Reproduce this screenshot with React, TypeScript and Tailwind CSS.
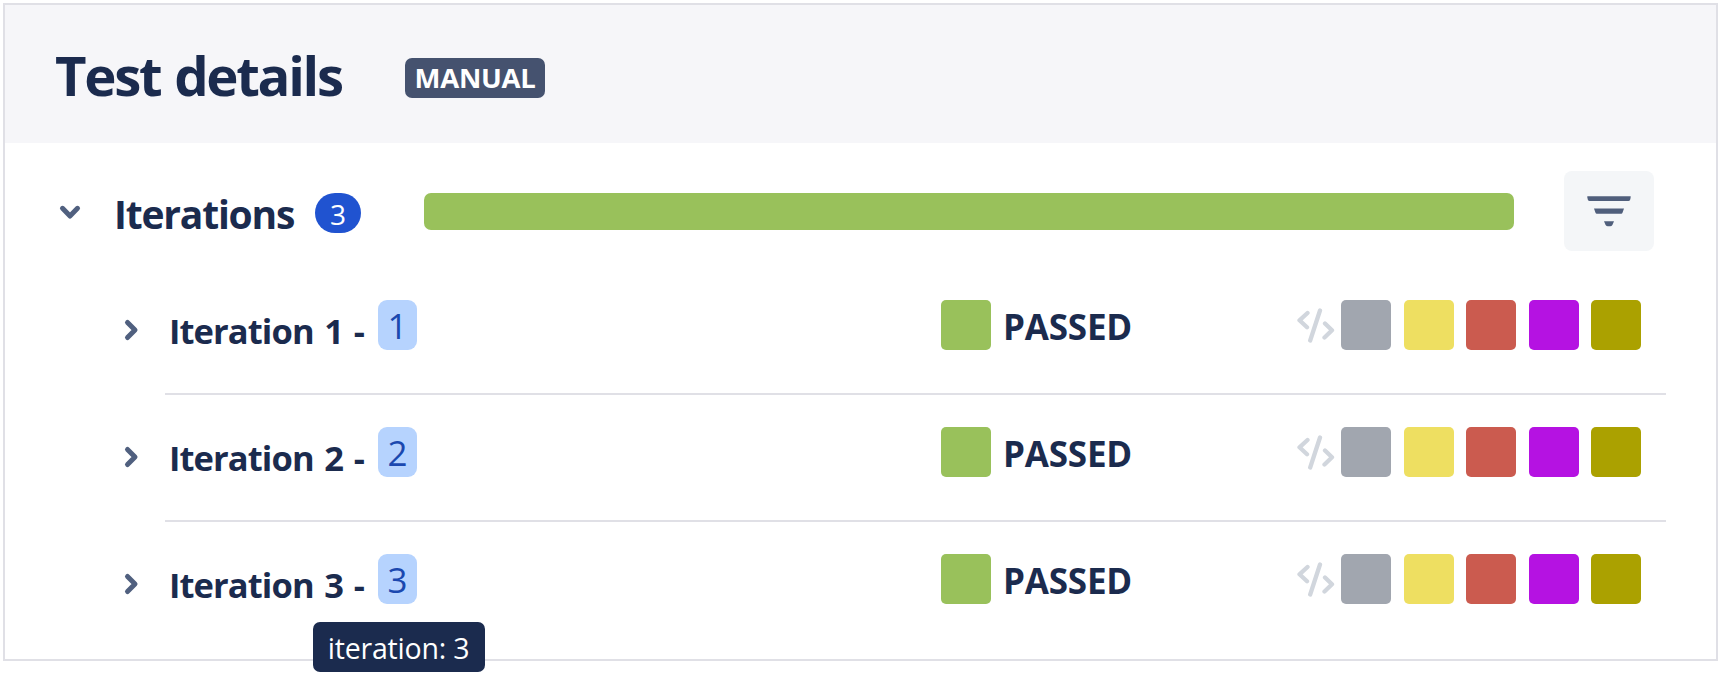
const iterations = [1, 2, 3];

const stepColors = [
  "bg-[#a1a6af]",
  "bg-[#eedf61]",
  "bg-[#cb5b4f]",
  "bg-[#b512e2]",
  "bg-[#aba100]",
];

const stepMargins = ["", "ml-[13px]", "ml-[12px]", "ml-[13px]", "ml-[12px]"];

function ChevronDown() {
  return (
    <svg className="h-5 w-6 shrink-0" viewBox="0 0 24 20" fill="none" stroke="#50607f" strokeWidth="5" strokeLinecap="round" strokeLinejoin="round">
      <path d="M4.500 7.300 12 15l7.500-7.700" />
    </svg>
  );
}

function ChevronRight() {
  return (
    <svg className="relative top-[5px] left-[2px] h-6 w-5 shrink-0" viewBox="0 0 20 24" fill="none" stroke="#50607f" strokeWidth="5" strokeLinecap="round" strokeLinejoin="round">
      <path d="M5.500 4.500 13 12l-7.500 7.500" />
    </svg>
  );
}

function FilterIcon() {
  return (
    <svg className="h-[31px] w-11" viewBox="0 0 44 31" fill="#505f7c">
      <path d="M.3.3h43.4q0 4.7-2.2 4.7h-39Q.3 5 .3.3Z" />
      <path d="M7 12.6h30l-1.4 4q-.4 1.2-1.4 1.2H9.8q-1 0-1.4-1.2Z" />
      <path d="M17 25.3h10l-1.6 3.6q-.8 1.4-2.2 1.4h-2.4q-1.4 0-2.2-1.4Z" />
    </svg>
  );
}

function CodeIcon() {
  return (
    <svg className="relative left-[2px] h-9 w-[38px] shrink-0" viewBox="0 0 38 36" fill="none" stroke="#d1d6dd" strokeWidth="4.3" strokeLinecap="round" strokeLinejoin="round">
      <path d="m10.500 6-8 7.300 7.500 7" />
      <path d="M23 3.500 13.200 33.500" />
      <path d="m28 16.500 7 6.800-7.500 7.200" />
    </svg>
  );
}

function IterationRow({ n, last }: { n: number; last: boolean }) {
  return (
    <div
      className={
        last
          ? "flex h-[127px] items-start pt-[32px]"
          : "flex h-[127px] items-start border-b-2 border-[#e0e0e6] pt-[32px]"
      }
    >
      <div className="-ml-[45px] flex h-[50px] w-[258px] shrink-0 items-center">
        <ChevronRight />
        <span className="relative top-[6px] ml-[29px] w-[209px] whitespace-nowrap text-[34.5px] leading-[50px] font-bold tracking-[-0.9px] [word-spacing:2.5px]">
          Iteration {n} -
        </span>
      </div>
      <span className="flex h-[50px] w-[39px] shrink-0 items-center justify-center rounded-[9px] bg-[#b6d3fe] text-[35px] leading-[50px] text-[#1b48af]">
        <span className="relative top-px">{n}</span>
      </span>
      <span className="ml-[524px] size-[50px] shrink-0 rounded-[5px] bg-[#99c15b]" />
      <span className="relative top-[2px] ml-[12px] w-[292px] whitespace-nowrap text-[35px] leading-[50px] font-bold tracking-[-0.2px]">PASSED</span>
      <div className="flex h-[50px] w-[46px] shrink-0 items-center">
        <CodeIcon />
      </div>
      {stepColors.map((c, i) => (
        <span key={c} className={`size-[50px] shrink-0 rounded-[5px] ${c} ${stepMargins[i]}`} />
      ))}
    </div>
  );
}

export default function App() {
  return (
    <div className="h-[673px] w-[1725px] overflow-hidden bg-white pt-[3px] pl-[3px] font-['Open_Sans',sans-serif] text-[#1b2b4e]">
      <section className="relative h-[658px] w-[1715px] border-2 border-[#e0e0e6]">
        <header className="flex h-[138px] items-center bg-[#f6f6f9] pl-[50px]">
          <h1 className="relative top-px w-[350px] whitespace-nowrap text-[54.500px] leading-[64px] font-bold tracking-[-2.3px] [word-spacing:2px]">Test details</h1>
          <span className="relative top-[4px] flex h-10 w-[140px] items-center justify-center rounded-[7px] bg-[#45526f] text-[27.500px] leading-10 font-bold tracking-[-0.3px] text-white">
            MANUAL
          </span>
        </header>
        <div className="flex h-[125px] items-center pt-[11px] pl-[53px]">
          <ChevronDown />
          <h2 className="relative top-[3px] left-px ml-[31px] w-[202px] shrink-0 whitespace-nowrap text-[39px] leading-[50px] font-bold tracking-[-1.2px]">Iterations</h2>
          <span className="relative top-[2px] flex h-10 w-[46px] shrink-0 items-center justify-center rounded-full bg-[#2053d0] text-[28px] leading-10 text-white">
            <span className="relative top-px">3</span>
          </span>
          <div className="ml-[63px] h-[37px] w-[1090px] shrink-0 rounded-[7px] bg-[#99c15b]" />
          <button className="ml-[50px] flex h-20 w-[90px] shrink-0 items-center justify-center rounded-lg bg-[#f4f6f8]">
            <FilterIcon />
          </button>
        </div>
        <div className="ml-[160px] w-[1501px]">
          {iterations.map((n) => (
            <IterationRow key={n} n={n} last={n === 3} />
          ))}
        </div>
        <div role="tooltip" className="absolute top-[617px] left-[307.5px] flex h-[50px] w-[172px] items-center justify-center rounded-[7px] bg-[#1b2b4e] text-[28.5px] leading-[50px] tracking-[-0.2px] whitespace-nowrap text-white">
          <span className="relative top-px">iteration: 3</span>
        </div>
      </section>
    </div>
  );
}
